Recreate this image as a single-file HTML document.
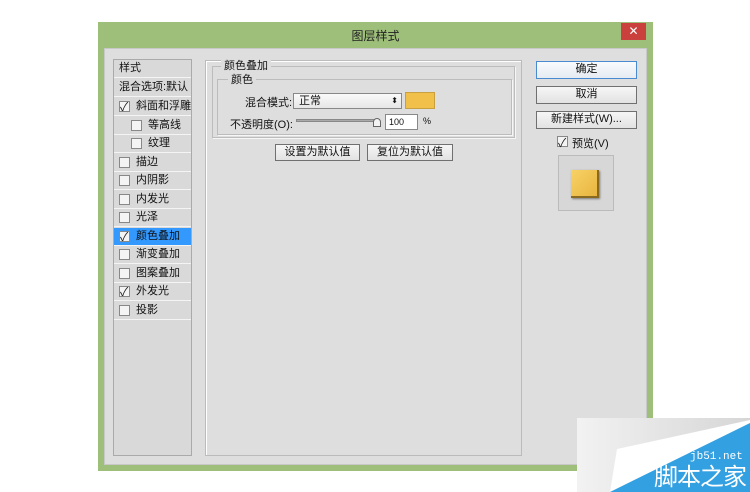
<!DOCTYPE html>
<html><head><meta charset="utf-8"><style>
*{margin:0;padding:0;box-sizing:border-box}
body{width:750px;height:492px;background:#fff;position:relative;overflow:hidden;font-family:"Liberation Sans","Noto Sans CJK SC",sans-serif;font-size:11px;color:#111}
.a{position:absolute}
.win{left:98px;top:22px;width:555px;height:449px;background:#9dbf79}
.body{left:104px;top:48px;width:543px;height:417px;background:#dedede;border:1px solid #c8c8c8}
.title{left:98px;top:22px;width:555px;height:26px;text-align:center;line-height:28px;font-size:12px;color:#222}
.close{left:621px;top:23px;width:25px;height:17px;background:#c9403c;color:#fff;text-align:center;line-height:16px;font-size:12px}
.lp{left:113px;top:59px;width:79px;height:397px;border:1px solid #aaa;background:#d9d9d9}
.it{position:absolute;left:0;width:77px;height:18px;border-bottom:1px solid #f4f4f4;line-height:17px;font-size:11px}
.cb{position:absolute;width:11px;height:11px;border:1px solid #888;background:#f4f4f4;top:3px}
.ck{position:absolute;font-size:12px;top:-3px;left:0;color:#222}
.mp{left:205px;top:60px;width:317px;height:396px;border:1px solid #bbb;box-shadow:inset 1px 1px #fff}
.fs{border:1px solid #bcbcbc;box-shadow:1px 1px #f6f6f6}
.btn{position:absolute;border:1px solid #707070;background:linear-gradient(#f6f6f6,#e2e2e2);text-align:center;font-size:11px;line-height:15px}
</style></head><body>
<div class="a win"></div>
<div class="a title">图层样式</div>
<div class="a close">✕</div>
<div class="a body"></div>
<div class="a lp">
<div class="it" style="top:0;padding-left:5px;border-bottom:1px solid #f4f4f4">样式</div>
<div class="it" style="top:19px;padding-left:5px">混合选项:默认</div>
<div class="it" style="top:38px"><span class="cb" style="left:5px"><span class="ck">✓</span></span><span style="position:absolute;left:22px">斜面和浮雕</span></div>
<div class="it" style="top:57px"><span class="cb" style="left:17px"></span><span style="position:absolute;left:34px">等高线</span></div>
<div class="it" style="top:75px"><span class="cb" style="left:17px"></span><span style="position:absolute;left:34px">纹理</span></div>
<div class="it" style="top:94px"><span class="cb" style="left:5px"></span><span style="position:absolute;left:22px">描边</span></div>
<div class="it" style="top:112px"><span class="cb" style="left:5px"></span><span style="position:absolute;left:22px">内阴影</span></div>
<div class="it" style="top:131px"><span class="cb" style="left:5px"></span><span style="position:absolute;left:22px">内发光</span></div>
<div class="it" style="top:149px"><span class="cb" style="left:5px"></span><span style="position:absolute;left:22px">光泽</span></div>
<div class="it" style="top:168px;background:#3399ff"><span class="cb" style="left:5px"><span class="ck">✓</span></span><span style="position:absolute;left:22px">颜色叠加</span></div>
<div class="it" style="top:186px"><span class="cb" style="left:5px"></span><span style="position:absolute;left:22px">渐变叠加</span></div>
<div class="it" style="top:205px"><span class="cb" style="left:5px"></span><span style="position:absolute;left:22px">图案叠加</span></div>
<div class="it" style="top:223px"><span class="cb" style="left:5px"><span class="ck">✓</span></span><span style="position:absolute;left:22px">外发光</span></div>
<div class="it" style="top:242px"><span class="cb" style="left:5px"></span><span style="position:absolute;left:22px">投影</span></div>
</div>
<div class="a mp"></div>
<div class="a fs" style="left:212px;top:66px;width:303px;height:72px"></div>
<div class="a" style="left:221px;top:57px;background:#dedede;padding:0 3px">颜色叠加</div>
<div class="a fs" style="left:217px;top:79px;width:295px;height:56px"></div>
<div class="a" style="left:228px;top:71px;background:#dedede;padding:0 3px">颜色</div>
<div class="a" style="left:245px;top:94px">混合模式:</div>
<div class="a" style="left:293px;top:93px;width:109px;height:16px;border:1px solid #888;background:linear-gradient(#fafafa,#e6e6e6);padding-left:5px;line-height:14px">正常<span style="position:absolute;right:3px;font-size:8px">⬍</span></div>
<div class="a" style="left:405px;top:92px;width:30px;height:17px;background:#f0c04a;border:1px solid #c9a040"></div>
<div class="a" style="left:230px;top:116px">不透明度(O):</div>
<div class="a" style="left:296px;top:119px;width:84px;height:3px;background:#aaa;border:1px solid #888"></div>
<div class="a" style="left:373px;top:118px;width:8px;height:9px;border:1px solid #666;background:#f4f4f4;border-radius:4px 4px 0 0"></div>
<div class="a" style="left:385px;top:114px;width:33px;height:16px;border:1px solid #888;background:#fff;padding-left:3px;line-height:14px;font-size:9px">100</div>
<div class="a" style="left:423px;top:116px;font-size:9px">%</div>
<div class="btn" style="left:275px;top:144px;width:85px;height:17px">设置为默认值</div>
<div class="btn" style="left:367px;top:144px;width:86px;height:17px">复位为默认值</div>
<div class="btn" style="left:536px;top:61px;width:101px;height:18px;border-color:#4a8ad0;background:linear-gradient(#f9fbfd,#e6ecf3)">确定</div>
<div class="btn" style="left:536px;top:86px;width:101px;height:18px">取消</div>
<div class="btn" style="left:536px;top:111px;width:101px;height:18px">新建样式(W)...</div>
<div class="a cb" style="left:557px;top:136px;position:absolute"><span class="ck">✓</span></div>
<div class="a" style="left:572px;top:135px">预览(V)</div>
<div class="a" style="left:558px;top:155px;width:56px;height:56px;border:1px solid #bbb;background:#d7d7d7"></div>
<div class="a" style="left:571px;top:170px;width:28px;height:28px;background:linear-gradient(135deg,#f8d266,#e8b540);border-right:2px solid #8a6a20;border-bottom:2px solid #8a6a20;box-shadow:1px 1px 2px #777"></div>
<svg class="a" style="left:577px;top:418px" width="173" height="74">
<defs><linearGradient id="g" x1="0" x2="1"><stop offset="0" stop-color="#f2f2f2"/><stop offset="1" stop-color="#d6d6d6"/></linearGradient></defs>
<rect x="0" y="0" width="173" height="74" fill="url(#g)"/>
<polygon points="40,31 173,2 173,6 33,74" fill="#fff"/>
<polygon points="173,5 173,74 33,74" fill="#33a0e2"/>
</svg>
<div class="a" style="left:690px;top:451px;font-size:11px;color:#fff;font-family:'Liberation Mono',monospace">jb51.net</div>
<div class="a" style="left:654px;top:464px;font-size:24px;color:#fff;line-height:28px;letter-spacing:-1px">脚本之家</div>
</body></html>
